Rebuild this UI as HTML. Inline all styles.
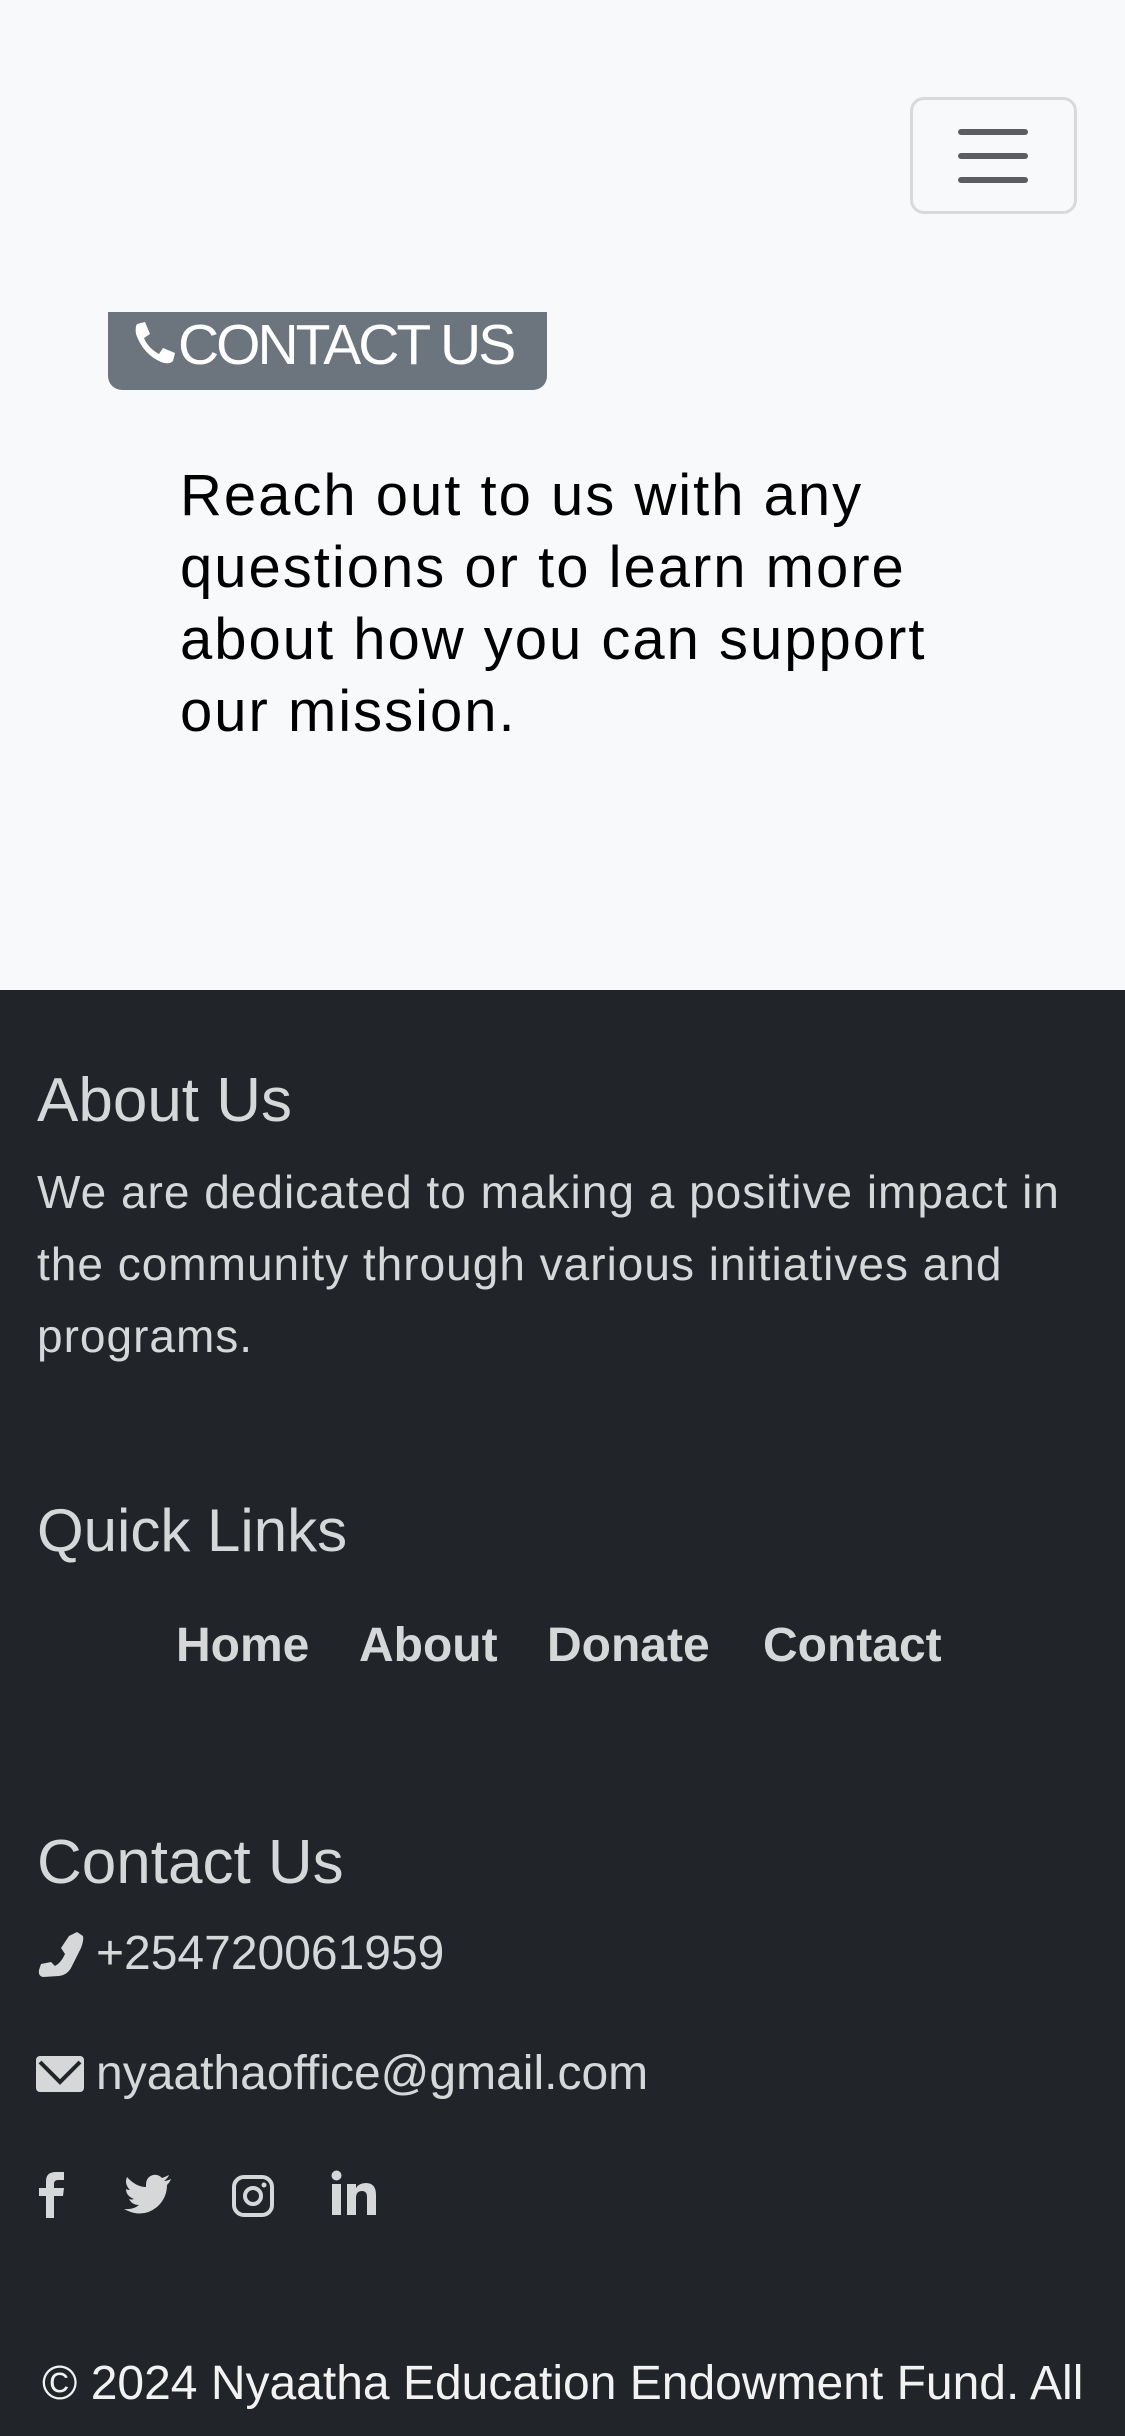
<!DOCTYPE html>
<html><head><meta charset="utf-8"><style>
*{margin:0;padding:0;box-sizing:border-box}
html,body{width:1125px;height:2436px;overflow:hidden;background:#f8f9fa;font-family:"Liberation Sans",sans-serif}
.a{position:absolute;white-space:nowrap;line-height:1}
.f{color:#d6d7d9}
</style></head><body>
<div class="a" style="left:910px;top:97px;width:167px;height:117px;border:3px solid #d9d9d9;border-radius:14px"></div>
<div class="a" style="left:958px;top:129px;width:70px;height:6px;background:#5b5d60;border-radius:3px"></div>
<div class="a" style="left:958px;top:153px;width:70px;height:6px;background:#5b5d60;border-radius:3px"></div>
<div class="a" style="left:958px;top:177px;width:70px;height:6px;background:#5b5d60;border-radius:3px"></div>

<div class="a" style="left:108px;top:312px;width:439px;height:78px;background:#6c757d;border-radius:0 0 14px 14px"></div>
<svg class="a" style="left:131px;top:318px" width="50" height="50" viewBox="0 0 50 50"><path d="M6 6 L14 4 L19 16 L13 20 Q17 30 28 36 L32 30 L44 35 L42 43 Q38 47 30 44 Q12 36 5 16 Q4 9 6 6Z" fill="#fff"/></svg>
<div class="a" style="left:178px;top:317px;font-size:57px;color:#fff;letter-spacing:-3px">CONTACT US</div>

<div class="a" style="left:180px;top:460px;font-size:58px;line-height:72px;letter-spacing:2px;color:#000;white-space:normal">Reach out to us with any<br>questions or to learn more<br>about how you can support<br>our mission.</div>

<div class="a" style="left:0;top:990px;width:1125px;height:1446px;background:#212529"></div>

<div class="a f" style="left:37px;top:1070px;font-size:62px">About Us</div>
<div class="a f" style="left:37px;top:1156px;font-size:46px;line-height:72px;letter-spacing:1px;font-weight:300">We are dedicated to making a positive impact in<br>the community through various initiatives and<br>programs.</div>

<div class="a f" style="left:37px;top:1501px;font-size:60px">Quick Links</div>
<div class="a f" style="left:176px;top:1622px;font-size:48px;font-weight:bold">Home</div>
<div class="a f" style="left:359px;top:1622px;font-size:48px;font-weight:bold">About</div>
<div class="a f" style="left:547px;top:1622px;font-size:48px;font-weight:bold">Donate</div>
<div class="a f" style="left:763px;top:1622px;font-size:48px;font-weight:bold">Contact</div>

<div class="a f" style="left:37px;top:1832px;font-size:62px">Contact Us</div>
<svg class="a" style="left:37px;top:1930px" width="48" height="48" viewBox="0 0 48 48"><path d="M40 2 L46 6 Q47 10 44 18 L34 38 Q30 45 22 46 L6 47 Q1 46 2 40 L4 34 L14 32 L18 36 Q24 33 28 24 L24 18 L32 6Z" fill="#d6d7d9"/></svg>
<div class="a f" style="left:96px;top:1930px;font-size:48px;font-weight:300">+254720061959</div>
<svg class="a" style="left:36px;top:2056px" width="48" height="36" viewBox="0 0 48 36"><rect x="0" y="0" width="48" height="36" rx="4" fill="#d6d7d9"/><path d="M4 6 L24 26 L44 6" stroke="#212529" stroke-width="4" fill="none"/></svg>
<div class="a f" style="left:96px;top:2050px;font-size:48px;font-weight:300">nyaathaoffice@gmail.com</div>

<svg class="a" style="left:37px;top:2170px" width="28" height="48" viewBox="0 0 28 48"><path d="M9 48 V26 H2 V18 H9 V11 Q9 2 19 2 H27 V10 H21 Q17 10 17 14 V18 H27 L26 26 H17 V48Z" fill="#d6d7d9"/></svg>
<svg class="a" style="left:124px;top:2174px" width="48" height="40" viewBox="0 0 48 40"><path d="M47 5 Q43 7 40 7 Q44 4 45 1 Q41 3 38 4 Q34 0 29 1 Q22 3 22 11 L22 13 Q12 13 3 3 Q0 10 6 16 Q4 16 2 15 Q2 22 10 25 Q7 26 5 25 Q8 31 15 31 Q9 36 0 35 Q18 45 33 33 Q43 24 43 11 Q46 8 47 5Z" fill="#d6d7d9"/></svg>
<svg class="a" style="left:231px;top:2174px" width="44" height="44" viewBox="0 0 44 44"><rect x="3" y="3" width="38" height="38" rx="10" stroke="#d6d7d9" stroke-width="4" fill="none"/><circle cx="22" cy="22" r="8" stroke="#d6d7d9" stroke-width="4" fill="none"/><circle cx="33" cy="11" r="2.5" fill="#d6d7d9"/></svg>
<svg class="a" style="left:331px;top:2170px" width="46" height="46" viewBox="0 0 46 46"><rect x="1" y="14" width="9" height="31" fill="#d6d7d9"/><circle cx="5.5" cy="5.5" r="5" fill="#d6d7d9"/><path d="M16 14 H25 V18 Q28 13 35 13 Q45 13 45 25 V45 H36 V27 Q36 21 31 21 Q25 21 25 28 V45 H16Z" fill="#d6d7d9"/></svg>

<div class="a" style="left:42px;top:2360px;font-size:48px;color:#f2f2f2;font-weight:300">© 2024 Nyaatha Education Endowment Fund. All</div>
</body></html>
